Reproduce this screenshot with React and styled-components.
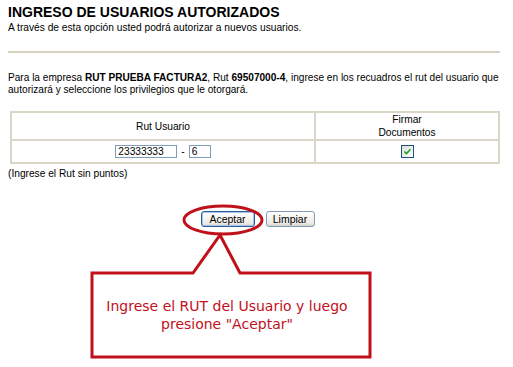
import React from "react";
import styled, { createGlobalStyle } from "styled-components";

const GlobalStyle = createGlobalStyle`
  body {
    margin: 0;
    background: #ffffff;
    font-family: "Liberation Sans", Arial, sans-serif;
    color: #000000;
  }
`;

const Page = styled.div`
  width: 513px;
  height: 367px;
  overflow: hidden;
`;

const Content = styled.div`
  padding: 5px 13px 0 8px;
`;

const Title = styled.h1`
  margin: 0;
  font-size: 14px;
  line-height: 15px;
  font-weight: bold;
`;

const Subtitle = styled.p`
  margin: 2px 0 0;
  font-size: 10.2px;
  line-height: 12px;
`;

const Rule = styled.hr`
  margin: 17px 0 0;
  border: 0;
  height: 2px;
  background: #d6d2c2;
`;

const Intro = styled.p`
  margin: 19px -6px 0 0;
  font-size: 10.1px;
  line-height: 12px;
`;

const Table = styled.table`
  margin: 15px 0 0 2px;
  width: 490px;
  border-collapse: collapse;
  font-size: 10.2px;
`;

const Cell = styled.td`
  border: 2px solid #d9d6c8;
  text-align: center;
  vertical-align: middle;
  padding: 0;
  height: ${(p) => p.$h}px;
  width: ${(p) => (p.$w ? p.$w + "px" : "auto")};
  line-height: 13px;
`;

const RutField = styled.input`
  box-sizing: border-box;
  height: 13px;
  width: ${(p) => p.$w}px;
  border: 1px solid #7f9db9;
  padding: 0 0 0 2px;
  font-family: "Liberation Sans", Arial, sans-serif;
  font-size: 10.2px;
  vertical-align: middle;
  outline: none;
`;

const Dash = styled.span`
  display: inline-block;
  margin: 0 4px;
  font-size: 10.2px;
  vertical-align: middle;
`;

const CheckBox = styled.span`
  display: inline-flex;
  align-items: center;
  justify-content: center;
  box-sizing: border-box;
  width: 13px;
  height: 13px;
  border: 1px solid #1c5180;
  background: linear-gradient(135deg, #dcdcd7, #ffffff);
  vertical-align: middle;
`;

const Note = styled.p`
  margin: 4px 0 0;
  font-size: 10.2px;
  line-height: 12px;
`;

const Annotated = styled.div`
  position: relative;
  margin-top: 21px;
  width: 513px;
  height: 167px;
`;

const ButtonRow = styled.div`
  display: flex;
  justify-content: center;
  gap: 11px;
  padding: 10px 0 0 2px;
`;

const Button = styled.button`
  box-sizing: border-box;
  height: 16px;
  width: ${(p) => p.$w}px;
  padding: 0;
  font-family: "Liberation Sans", Arial, sans-serif;
  font-size: 10.5px;
  color: #000;
  border: 1px solid ${(p) => (p.$focus ? "#2c5c9c" : "#7f9db9")};
  border-radius: 3px;
  background: linear-gradient(#ffffff, #ecebe6 80%, #d6d0c5);
  box-shadow: ${(p) => (p.$focus ? "inset 0 0 0 1px #a8c4ec" : "none")};
`;

const Callout = styled.div`
  display: flex;
  align-items: center;
  justify-content: center;
  box-sizing: border-box;
  margin: 46px 0 0 92px;
  padding-right: 8px;
  width: 278px;
  height: 84px;
  text-align: center;
  font-family: "DejaVu Sans", Verdana, sans-serif;
  font-size: 14px;
  line-height: 18px;
  color: #c2101c;
`;

const Marks = styled.svg`
  position: absolute;
  left: 0;
  top: 0;
  pointer-events: none;
`;

export default function App() {
  return (
    <Page>
      <GlobalStyle />
      <Content>
        <Title>INGRESO DE USUARIOS AUTORIZADOS</Title>
        <Subtitle>A través de esta opción usted podrá autorizar a nuevos usuarios.</Subtitle>
        <Rule />
        <Intro>
          Para la empresa <b>RUT PRUEBA FACTURA2</b>, Rut <b>69507000-4</b>, ingrese en los recuadros el rut del usuario que
          autorizará y seleccione los privilegios que le otorgará.
        </Intro>
        <Table>
          <tbody>
            <tr>
              <Cell $h={26} $w={302}>Rut Usuario</Cell>
              <Cell $h={26}>Firmar<br />Documentos</Cell>
            </tr>
            <tr>
              <Cell $h={21}>
                <RutField $w={62} defaultValue="23333333" />
                <Dash>-</Dash>
                <RutField $w={22} defaultValue="6" />
              </Cell>
              <Cell $h={21}>
                <CheckBox>
                  <svg width="7" height="7" viewBox="0 0 7 7">
                    <path d="M0.5 3.5 L2.5 5.5 L6.5 1.2" fill="none" stroke="#21a121" strokeWidth="1.6" />
                  </svg>
                </CheckBox>
              </Cell>
            </tr>
          </tbody>
        </Table>
        <Note>(Ingrese el Rut sin puntos)</Note>
      </Content>
      <Annotated>
        <ButtonRow>
          <Button $w={54} $focus>Aceptar</Button>
          <Button $w={49}>Limpiar</Button>
        </ButtonRow>
        <Callout>
          <span>
            Ingrese el RUT del Usuario y luego
            <br />
            presione "Aceptar"
          </span>
        </Callout>
        <Marks width="513" height="167" viewBox="0 0 513 167">
          <ellipse cx="223" cy="19" rx="39" ry="14" fill="none" stroke="#c0101a" strokeWidth="3" />
          <path
            d="M220 34 L240 72 L370 72 L370 156 L92 156 L92 72 L193 72 Z"
            fill="none"
            stroke="#c0101a"
            strokeWidth="3"
            strokeLinejoin="miter"
          />
        </Marks>
      </Annotated>
    </Page>
  );
}
